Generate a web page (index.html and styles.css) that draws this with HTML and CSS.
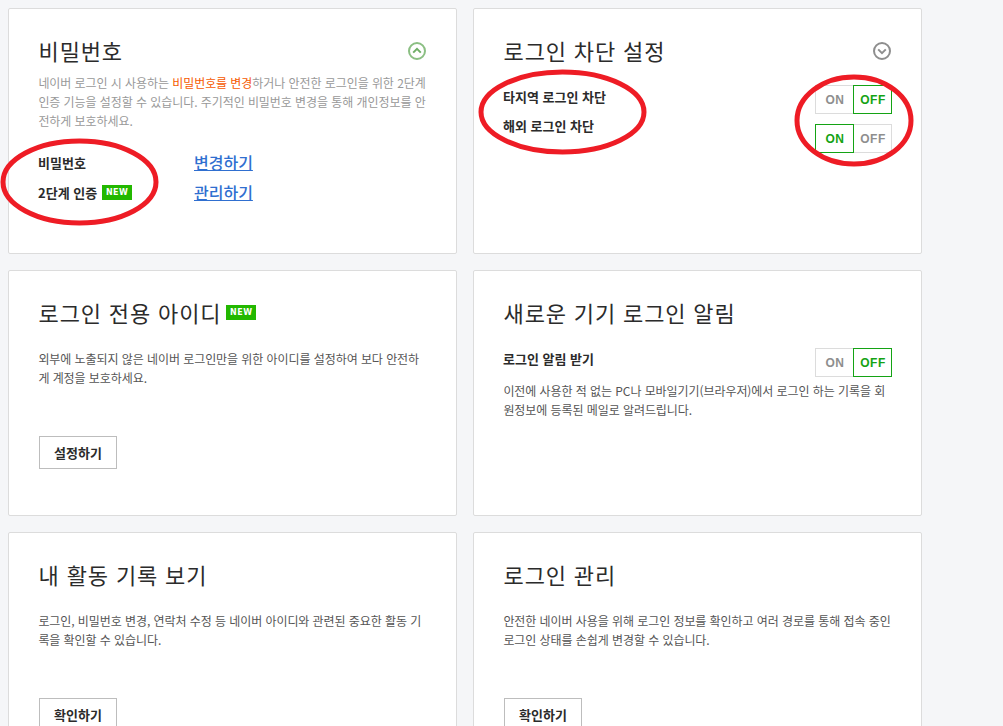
FILE: index.html
```html
<!DOCTYPE html>
<html lang="ko">
<head>
<meta charset="utf-8">
<title>보안 설정</title>
<link rel="stylesheet" href="styles.css">
</head>
<body>
<main class="grid">
  <section class="card">
    <div class="head">
      <h2>비밀번호</h2>
      <svg class="chev" width="20" height="20" viewBox="0 0 20 20"><circle cx="10" cy="10" r="8" fill="none" stroke="#8bbf83" stroke-width="2"/><path d="M6.2 11.6 10 7.8l3.8 3.8" fill="none" stroke="#6fae66" stroke-width="2"/></svg>
    </div>
    <p class="desc light tight">네이버 로그인 시 사용하는 <em>비밀번호를 변경</em>하거나 안전한 로그인을 위한 2단계 인증 기능을 설정할 수 있습니다. 주기적인 비밀번호 변경을 통해 개인정보를 안전하게 보호하세요.</p>
    <div class="links">
      <div class="link-row"><strong>비밀번호</strong><a href="#">변경하기</a></div>
      <div class="link-row"><strong>2단계 인증 <span class="new">NEW</span></strong><a href="#">관리하기</a></div>
    </div>
  </section>

  <section class="card">
    <div class="head">
      <h2>로그인 차단 설정</h2>
      <svg class="chev" width="20" height="20" viewBox="0 0 20 20"><circle cx="10" cy="10" r="8" fill="none" stroke="#8e8e8e" stroke-width="2"/><path d="M6.2 8.4 10 12.2l3.8-3.8" fill="none" stroke="#8e8e8e" stroke-width="2"/></svg>
    </div>
    <div class="setting first">
      <strong>타지역 로그인 차단</strong>
      <div class="toggle"><span>ON</span><span class="on">OFF</span></div>
    </div>
    <div class="setting second">
      <strong>해외 로그인 차단</strong>
      <div class="toggle"><span class="on">ON</span><span>OFF</span></div>
    </div>
  </section>

  <section class="card">
    <div class="head">
      <h2>로그인 전용 아이디 <span class="new">NEW</span></h2>
    </div>
    <p class="desc spaced">외부에 노출되지 않은 네이버 로그인만을 위한 아이디를 설정하여 보다 안전하게 계정을 보호하세요.</p>
    <a class="btn" href="#">설정하기</a>
  </section>

  <section class="card">
    <div class="head">
      <h2>새로운 기기 로그인 알림</h2>
    </div>
    <div class="setting alert">
      <strong>로그인 알림 받기</strong>
      <div class="toggle"><span>ON</span><span class="on">OFF</span></div>
    </div>
    <p class="desc after">이전에 사용한 적 없는 PC나 모바일기기(브라우저)에서 로그인 하는 기록을 회원정보에 등록된 메일로 알려드립니다.</p>
  </section>

  <section class="card">
    <div class="head">
      <h2>내 활동 기록 보기</h2>
    </div>
    <p class="desc spaced">로그인, 비밀번호 변경, 연락처 수정 등 네이버 아이디와 관련된 중요한 활동 기록을 확인할 수 있습니다.</p>
    <a class="btn" href="#">확인하기</a>
  </section>

  <section class="card">
    <div class="head">
      <h2>로그인 관리</h2>
    </div>
    <p class="desc spaced">안전한 네이버 사용을 위해 로그인 정보를 확인하고 여러 경로를 통해 접속 중인 로그인 상태를 손쉽게 변경할 수 있습니다.</p>
    <a class="btn" href="#">확인하기</a>
  </section>
</main>
<svg class="marks" width="1003" height="726" viewBox="0 0 1003 726">
  <ellipse cx="79.5" cy="182" rx="76.5" ry="41" />
  <ellipse cx="562.5" cy="112" rx="81.5" ry="40" />
  <ellipse cx="854" cy="120.5" rx="57" ry="43.5" />
</svg>
</body>
</html>
```
FILE: styles.css
```css
* { box-sizing: border-box; }
html, body { height: 100%; overflow: hidden; }
body {
  margin: 0;
  padding: 8px;
  background: #f5f6f8;
  color: #222;
  font-family: "Noto Sans CJK KR", "Liberation Sans", sans-serif;
  font-size: 12px;
}
.grid {
  display: grid;
  grid-template-columns: 449px 449px;
  grid-auto-rows: 246px;
  gap: 16px;
}
.card {
  background: #fff;
  border: 1px solid #dcdcdc;
  border-radius: 2px;
  padding: 27px 29px 0 29px;
}
.head {
  display: flex;
  justify-content: space-between;
  align-items: center;
  height: 29px;
}
h2 {
  margin: 0;
  padding-left: 0.6px;
  font-size: 22px;
  font-weight: 400;
  line-height: 29px;
  letter-spacing: 0.85px;
  color: #2b2b2b;
  display: flex;
  align-items: center;
  gap: 5px;
}
.chev { flex: none; }
.desc {
  margin: 0;
  padding-left: 0.4px;
  font-size: 12px;
  line-height: 19px;
  color: #555;
  letter-spacing: -0.07px;
}
.desc.light { color: #999; }
.desc.tight { margin-top: 8px; }
.desc.spaced { margin-top: 22px; }
.desc.after { margin-top: 4px; }
.desc em { font-style: normal; color: #f65a00; }
strong { font-size: 13px; font-weight: 700; color: #2b2b2b; }
.links { margin-top: 17px; }
.link-row {
  display: flex;
  align-items: center;
  height: 30px;
}
.link-row strong {
  width: 156px;
  display: flex;
  align-items: center;
  gap: 5px;
}
.link-row a {
  font-size: 16px;
  font-weight: 500;
  color: #2f6fd0;
  text-decoration: underline;
}
.new {
  display: inline-block;
  width: 30px;
  height: 15px;
  background: #23b800;
  color: #fff;
  font-family: "DejaVu Sans", sans-serif;
  font-size: 8px;
  font-weight: 700;
  line-height: 15px;
  text-align: center;
  letter-spacing: 0.5px;
}
.setting {
  display: flex;
  justify-content: space-between;
  align-items: flex-start;
}
.setting strong { line-height: 18px; }
.setting.first { margin-top: 20px; height: 39px; }
.setting.first strong { margin-top: 3px; }
.setting.second { height: 29px; }
.setting.second strong { margin-top: -7px; }
.setting.alert { margin-top: 21px; height: 29px; }
.setting.alert strong { margin-top: 2px; }
.toggle { display: flex; height: 29px; flex: none; }
.toggle span {
  width: 39px;
  height: 29px;
  border: 1px solid #dcdcdc;
  color: #8e8e8e;
  font-family: "Liberation Sans", sans-serif;
  font-size: 12px;
  font-weight: 700;
  line-height: 28px;
  padding-left: 1px;
  text-align: center;
  letter-spacing: 0.5px;
}
.toggle span:first-child { margin-right: -1px; }
.toggle span.on {
  border-color: #14a314;
  color: #14a314;
  position: relative;
}
.btn {
  display: block;
  width: 78px;
  height: 33px;
  margin-top: 49px;
  margin-left: 1px;
  border: 1px solid #bdbdbd;
  color: #2b2b2b;
  font-size: 13px;
  font-weight: 700;
  line-height: 31px;
  text-align: center;
  text-decoration: none;
}
.marks {
  position: absolute;
  left: 0;
  top: 0;
  pointer-events: none;
}
.marks ellipse {
  fill: none;
  stroke: #ee1c25;
  stroke-width: 5;
}
```
